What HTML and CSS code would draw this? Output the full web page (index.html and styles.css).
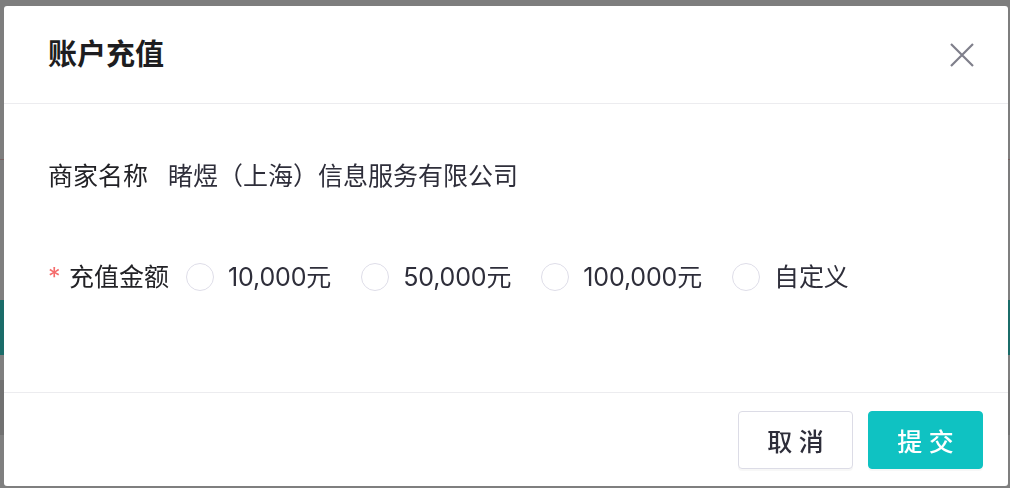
FILE: index.html
```html
<!DOCTYPE html>
<html lang="zh-CN">

<head>
    <meta charset="UTF-8">
    <meta name="viewport" content="width=device-width, initial-scale=1.0">
    <title>账户充值</title>
    <link rel="stylesheet" href="styles.css">
</head>

<body>
    <div class="page">
        <div class="page-top"></div>
        <div class="page-row"></div>
        <div class="page-gap"></div>
        <div class="page-tab"></div>
        <div class="page-gap small"></div>
        <div class="page-panel"></div>
    </div>

    <div class="mask">
        <div class="dialog">
            <div class="dialog-header">
                <span class="dialog-title">账户充值</span>
                <button class="dialog-close" type="button" aria-label="关闭">
                    <svg width="24" height="24" viewBox="0 0 24 24">
                        <path d="M1 1L23 23M23 1L1 23" stroke="#7f7f8b" stroke-width="2.2" fill="none" />
                    </svg>
                </button>
            </div>

            <div class="dialog-body">
                <div class="form-row">
                    <span class="form-label">商家名称</span>
                    <span class="form-value">睹煜（上海）信息服务有限公司</span>
                </div>
                <div class="form-row second">
                    <span class="form-label"><span class="required">*</span>充值金额</span>
                    <label class="radio"><span class="radio-dot"></span>10,000元</label>
                    <label class="radio"><span class="radio-dot"></span>50,000元</label>
                    <label class="radio"><span class="radio-dot"></span>100,000元</label>
                    <label class="radio"><span class="radio-dot"></span>自定义</label>
                </div>
            </div>

            <div class="dialog-footer">
                <button class="btn" type="button">取 消</button>
                <button class="btn btn-primary" type="button">提 交</button>
            </div>
        </div>
    </div>
</body>

</html>
```

FILE: styles.css
```css
* {
    box-sizing: border-box;
}
body {
    margin: 0;
    font-family: Inter, "Noto Sans CJK SC", sans-serif;
    background-color: #fff;
    width: 1010px;
    height: 488px;
    overflow: hidden;
}
.page {
    display: flex;
    flex-direction: column;
}
.page-top {
    height: 160px;
    border-bottom: 1px solid #f2c4c4;
    background-color: #fdfdfd;
}
.page-row {
    height: 30px;
    background-color: #f8f8fa;
}
.page-gap {
    height: 110px;
}
.page-gap.small {
    height: 25px;
}
.page-tab {
    height: 55px;
    background-color: #37d8d2;
}
.page-panel {
    height: 55px;
    background-color: #e2e2e2;
}
.mask {
    position: fixed;
    inset: 0;
    background-color: rgba(0, 0, 0, 0.5);
    padding: 6px 2px 2px 4px;
}
.dialog {
    background-color: #fff;
    border-radius: 3px;
    height: 480px;
    display: flex;
    flex-direction: column;
}
.dialog-header {
    height: 98px;
    flex-shrink: 0;
    padding: 0 34px 0 44px;
    display: flex;
    align-items: center;
    justify-content: space-between;
    border-bottom: 1px solid #ececef;
}
.dialog-title {
    font-size: 29px;
    font-weight: bold;
    color: #1d1d20;
    line-height: 40px;
}
.dialog-close {
    border: none;
    background: none;
    padding: 0;
    width: 24px;
    height: 24px;
    display: flex;
}
.dialog-body {
    flex: 1;
    padding: 52px 44px 0;
    font-size: 25px;
}
.form-row {
    display: flex;
    align-items: center;
    height: 40px;
    line-height: 40px;
}
.form-row.second {
    margin-top: 61px;
}
.form-label {
    color: #222226;
    padding-right: 20px;
    display: flex;
}
.form-row.second .form-label {
    padding-right: 17px;
}
.required {
    color: #f56c6c;
    width: 21px;
}
.form-value {
    color: #2e2e3a;
}
.radio {
    display: flex;
    align-items: center;
    color: #2e2e3a;
    margin-right: 30px;
    letter-spacing: -0.15px;
}
.radio-dot {
    width: 28px;
    height: 28px;
    border: 1px solid #dedde8;
    border-radius: 50%;
    margin-right: 14px;
}
.dialog-footer {
    height: 94px;
    flex-shrink: 0;
    border-top: 1px solid #ececef;
    display: flex;
    justify-content: flex-end;
    align-items: flex-start;
    padding: 18px 25px 0 0;
    gap: 15px;
}
.btn {
    width: 115px;
    height: 58px;
    border: 1px solid #dcdce6;
    border-radius: 4px;
    background-color: #fff;
    color: #2e2e3a;
    font-family: Inter, "Noto Sans CJK SC", sans-serif;
    font-size: 25px;
    font-weight: 500;
    box-shadow: 0 2px 0 rgba(0, 0, 0, 0.03);
    cursor: pointer;
}
.btn-primary {
    background-color: #0fc2c2;
    border-color: #0fc2c2;
    color: #fff;
}
```
